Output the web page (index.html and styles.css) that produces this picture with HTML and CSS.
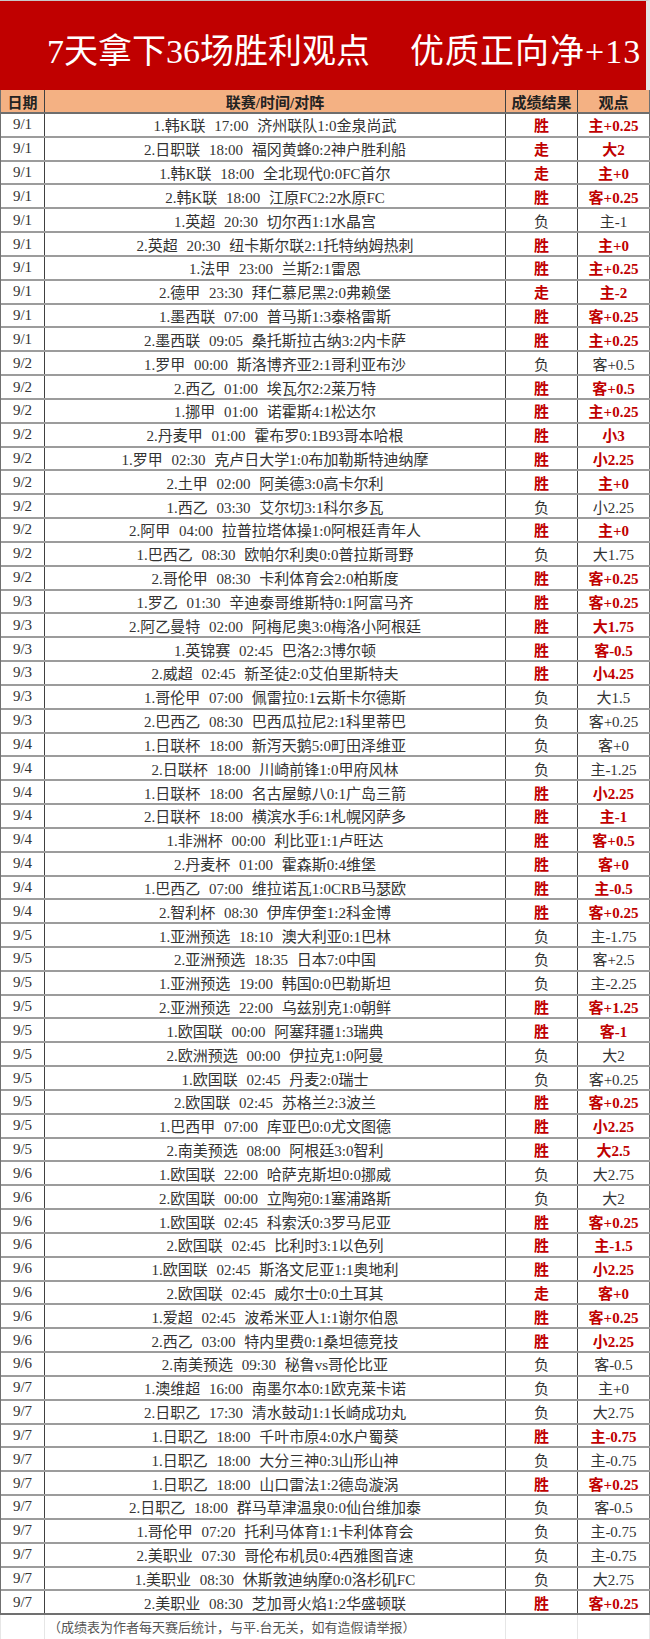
FILE: index.html
```html
<!DOCTYPE html>
<html lang="zh-CN">
<head>
<meta charset="utf-8">
<title>7天拿下36场胜利观点</title>
<link rel="stylesheet" href="styles.css">
</head>
<body>
<div class="sheet">
  <div class="title"><span>7天拿下36场胜利观点</span><span class="t2">优质正向净+13</span></div>
  <div class="table">
    <div class="row head"><div class="c">日期</div><div class="c">联赛/时间/对阵</div><div class="c">成绩结果</div><div class="c">观点</div></div>
    <div class="row win"><div class="c">9/1</div><div class="c m">1.韩K联 17:00 济州联队1:0金泉尚武</div><div class="c">胜</div><div class="c">主+0.25</div></div>
    <div class="row win"><div class="c">9/1</div><div class="c m">2.日职联 18:00 福冈黄蜂0:2神户胜利船</div><div class="c">走</div><div class="c">大2</div></div>
    <div class="row win"><div class="c">9/1</div><div class="c m">1.韩K联 18:00 全北现代0:0FC首尔</div><div class="c">走</div><div class="c">主+0</div></div>
    <div class="row win"><div class="c">9/1</div><div class="c m">2.韩K联 18:00 江原FC2:2水原FC</div><div class="c">胜</div><div class="c">客+0.25</div></div>
    <div class="row"><div class="c">9/1</div><div class="c m">1.英超 20:30 切尔西1:1水晶宫</div><div class="c">负</div><div class="c">主-1</div></div>
    <div class="row win"><div class="c">9/1</div><div class="c m">2.英超 20:30 纽卡斯尔联2:1托特纳姆热刺</div><div class="c">胜</div><div class="c">主+0</div></div>
    <div class="row win"><div class="c">9/1</div><div class="c m">1.法甲 23:00 兰斯2:1雷恩</div><div class="c">胜</div><div class="c">主+0.25</div></div>
    <div class="row win"><div class="c">9/1</div><div class="c m">2.德甲 23:30 拜仁慕尼黑2:0弗赖堡</div><div class="c">走</div><div class="c">主-2</div></div>
    <div class="row win"><div class="c">9/1</div><div class="c m">1.墨西联 07:00 普马斯1:3泰格雷斯</div><div class="c">胜</div><div class="c">客+0.25</div></div>
    <div class="row win"><div class="c">9/1</div><div class="c m">2.墨西联 09:05 桑托斯拉古纳3:2内卡萨</div><div class="c">胜</div><div class="c">主+0.25</div></div>
    <div class="row"><div class="c">9/2</div><div class="c m">1.罗甲 00:00 斯洛博齐亚2:1哥利亚布沙</div><div class="c">负</div><div class="c">客+0.5</div></div>
    <div class="row win"><div class="c">9/2</div><div class="c m">2.西乙 01:00 埃瓦尔2:2莱万特</div><div class="c">胜</div><div class="c">客+0.5</div></div>
    <div class="row win"><div class="c">9/2</div><div class="c m">1.挪甲 01:00 诺霍斯4:1松达尔</div><div class="c">胜</div><div class="c">主+0.25</div></div>
    <div class="row win"><div class="c">9/2</div><div class="c m">2.丹麦甲 01:00 霍布罗0:1B93哥本哈根</div><div class="c">胜</div><div class="c">小3</div></div>
    <div class="row win"><div class="c">9/2</div><div class="c m">1.罗甲 02:30 克卢日大学1:0布加勒斯特迪纳摩</div><div class="c">胜</div><div class="c">小2.25</div></div>
    <div class="row win"><div class="c">9/2</div><div class="c m">2.土甲 02:00 阿美德3:0高卡尔利</div><div class="c">胜</div><div class="c">主+0</div></div>
    <div class="row"><div class="c">9/2</div><div class="c m">1.西乙 03:30 艾尔切3:1科尔多瓦</div><div class="c">负</div><div class="c">小2.25</div></div>
    <div class="row win"><div class="c">9/2</div><div class="c m">2.阿甲 04:00 拉普拉塔体操1:0阿根廷青年人</div><div class="c">胜</div><div class="c">主+0</div></div>
    <div class="row"><div class="c">9/2</div><div class="c m">1.巴西乙 08:30 欧帕尔利奥0:0普拉斯哥野</div><div class="c">负</div><div class="c">大1.75</div></div>
    <div class="row win"><div class="c">9/2</div><div class="c m">2.哥伦甲 08:30 卡利体育会2:0柏斯度</div><div class="c">胜</div><div class="c">客+0.25</div></div>
    <div class="row win"><div class="c">9/3</div><div class="c m">1.罗乙 01:30 辛迪泰哥维斯特0:1阿富马齐</div><div class="c">胜</div><div class="c">客+0.25</div></div>
    <div class="row win"><div class="c">9/3</div><div class="c m">2.阿乙曼特 02:00 阿梅尼奥3:0梅洛小阿根廷</div><div class="c">胜</div><div class="c">大1.75</div></div>
    <div class="row win"><div class="c">9/3</div><div class="c m">1.英锦赛 02:45 巴洛2:3博尔顿</div><div class="c">胜</div><div class="c">客-0.5</div></div>
    <div class="row win"><div class="c">9/3</div><div class="c m">2.威超 02:45 新圣徒2:0艾伯里斯特夫</div><div class="c">胜</div><div class="c">小4.25</div></div>
    <div class="row"><div class="c">9/3</div><div class="c m">1.哥伦甲 07:00 佩雷拉0:1云斯卡尔德斯</div><div class="c">负</div><div class="c">大1.5</div></div>
    <div class="row"><div class="c">9/3</div><div class="c m">2.巴西乙 08:30 巴西瓜拉尼2:1科里蒂巴</div><div class="c">负</div><div class="c">客+0.25</div></div>
    <div class="row"><div class="c">9/4</div><div class="c m">1.日联杯 18:00 新泻天鹅5:0町田泽维亚</div><div class="c">负</div><div class="c">客+0</div></div>
    <div class="row"><div class="c">9/4</div><div class="c m">2.日联杯 18:00 川崎前锋1:0甲府风林</div><div class="c">负</div><div class="c">主-1.25</div></div>
    <div class="row win"><div class="c">9/4</div><div class="c m">1.日联杯 18:00 名古屋鲸八0:1广岛三箭</div><div class="c">胜</div><div class="c">小2.25</div></div>
    <div class="row win"><div class="c">9/4</div><div class="c m">2.日联杯 18:00 横滨水手6:1札幌冈萨多</div><div class="c">胜</div><div class="c">主-1</div></div>
    <div class="row win"><div class="c">9/4</div><div class="c m">1.非洲杯 00:00 利比亚1:1卢旺达</div><div class="c">胜</div><div class="c">客+0.5</div></div>
    <div class="row win"><div class="c">9/4</div><div class="c m">2.丹麦杯 01:00 霍森斯0:4维堡</div><div class="c">胜</div><div class="c">客+0</div></div>
    <div class="row win"><div class="c">9/4</div><div class="c m">1.巴西乙 07:00 维拉诺瓦1:0CRB马瑟欧</div><div class="c">胜</div><div class="c">主-0.5</div></div>
    <div class="row win"><div class="c">9/4</div><div class="c m">2.智利杯 08:30 伊库伊奎1:2科金博</div><div class="c">胜</div><div class="c">客+0.25</div></div>
    <div class="row"><div class="c">9/5</div><div class="c m">1.亚洲预选 18:10 澳大利亚0:1巴林</div><div class="c">负</div><div class="c">主-1.75</div></div>
    <div class="row"><div class="c">9/5</div><div class="c m">2.亚洲预选 18:35 日本7:0中国</div><div class="c">负</div><div class="c">客+2.5</div></div>
    <div class="row"><div class="c">9/5</div><div class="c m">1.亚洲预选 19:00 韩国0:0巴勒斯坦</div><div class="c">负</div><div class="c">主-2.25</div></div>
    <div class="row win"><div class="c">9/5</div><div class="c m">2.亚洲预选 22:00 乌兹别克1:0朝鲜</div><div class="c">胜</div><div class="c">客+1.25</div></div>
    <div class="row win"><div class="c">9/5</div><div class="c m">1.欧国联 00:00 阿塞拜疆1:3瑞典</div><div class="c">胜</div><div class="c">客-1</div></div>
    <div class="row"><div class="c">9/5</div><div class="c m">2.欧洲预选 00:00 伊拉克1:0阿曼</div><div class="c">负</div><div class="c">大2</div></div>
    <div class="row"><div class="c">9/5</div><div class="c m">1.欧国联 02:45 丹麦2:0瑞士</div><div class="c">负</div><div class="c">客+0.25</div></div>
    <div class="row win"><div class="c">9/5</div><div class="c m">2.欧国联 02:45 苏格兰2:3波兰</div><div class="c">胜</div><div class="c">客+0.25</div></div>
    <div class="row win"><div class="c">9/5</div><div class="c m">1.巴西甲 07:00 库亚巴0:0尤文图德</div><div class="c">胜</div><div class="c">小2.25</div></div>
    <div class="row win"><div class="c">9/5</div><div class="c m">2.南美预选 08:00 阿根廷3:0智利</div><div class="c">胜</div><div class="c">大2.5</div></div>
    <div class="row"><div class="c">9/6</div><div class="c m">1.欧国联 22:00 哈萨克斯坦0:0挪威</div><div class="c">负</div><div class="c">大2.75</div></div>
    <div class="row"><div class="c">9/6</div><div class="c m">2.欧国联 00:00 立陶宛0:1塞浦路斯</div><div class="c">负</div><div class="c">大2</div></div>
    <div class="row win"><div class="c">9/6</div><div class="c m">1.欧国联 02:45 科索沃0:3罗马尼亚</div><div class="c">胜</div><div class="c">客+0.25</div></div>
    <div class="row win"><div class="c">9/6</div><div class="c m">2.欧国联 02:45 比利时3:1以色列</div><div class="c">胜</div><div class="c">主-1.5</div></div>
    <div class="row win"><div class="c">9/6</div><div class="c m">1.欧国联 02:45 斯洛文尼亚1:1奥地利</div><div class="c">胜</div><div class="c">小2.25</div></div>
    <div class="row win"><div class="c">9/6</div><div class="c m">2.欧国联 02:45 威尔士0:0土耳其</div><div class="c">走</div><div class="c">客+0</div></div>
    <div class="row win"><div class="c">9/6</div><div class="c m">1.爱超 02:45 波希米亚人1:1谢尔伯恩</div><div class="c">胜</div><div class="c">客+0.25</div></div>
    <div class="row win"><div class="c">9/6</div><div class="c m">2.西乙 03:00 特内里费0:1桑坦德竞技</div><div class="c">胜</div><div class="c">小2.25</div></div>
    <div class="row"><div class="c">9/6</div><div class="c m">2.南美预选 09:30 秘鲁vs哥伦比亚</div><div class="c">负</div><div class="c">客-0.5</div></div>
    <div class="row"><div class="c">9/7</div><div class="c m">1.澳维超 16:00 南墨尔本0:1欧克莱卡诺</div><div class="c">负</div><div class="c">主+0</div></div>
    <div class="row"><div class="c">9/7</div><div class="c m">2.日职乙 17:30 清水鼓动1:1长崎成功丸</div><div class="c">负</div><div class="c">大2.75</div></div>
    <div class="row win"><div class="c">9/7</div><div class="c m">1.日职乙 18:00 千叶市原4:0水户蜀葵</div><div class="c">胜</div><div class="c">主-0.75</div></div>
    <div class="row"><div class="c">9/7</div><div class="c m">1.日职乙 18:00 大分三神0:3山形山神</div><div class="c">负</div><div class="c">主-0.75</div></div>
    <div class="row win"><div class="c">9/7</div><div class="c m">1.日职乙 18:00 山口雷法1:2德岛漩涡</div><div class="c">胜</div><div class="c">客+0.25</div></div>
    <div class="row"><div class="c">9/7</div><div class="c m">2.日职乙 18:00 群马草津温泉0:0仙台维加泰</div><div class="c">负</div><div class="c">客-0.5</div></div>
    <div class="row"><div class="c">9/7</div><div class="c m">1.哥伦甲 07:20 托利马体育1:1卡利体育会</div><div class="c">负</div><div class="c">主-0.75</div></div>
    <div class="row"><div class="c">9/7</div><div class="c m">2.美职业 07:30 哥伦布机员0:4西雅图音速</div><div class="c">负</div><div class="c">主-0.75</div></div>
    <div class="row"><div class="c">9/7</div><div class="c m">1.美职业 08:30 休斯敦迪纳摩0:0洛杉矶FC</div><div class="c">负</div><div class="c">大2.75</div></div>
    <div class="row win last"><div class="c">9/7</div><div class="c m">2.美职业 08:30 芝加哥火焰1:2华盛顿联</div><div class="c">胜</div><div class="c">客+0.25</div></div>
  </div>
  <div class="foot"><div class="f"></div><div class="f note">（成绩表为作者每天赛后统计，与平.台无关，如有造假请举报）</div><div class="f"></div><div class="f"></div></div>
</div>
</body>
</html>
```

FILE: styles.css
```css
html, body {
  margin: 0;
  padding: 0;
  background: #ffffff;
}

.sheet {
  width: 650px;
  font-family: "Liberation Serif", "Noto Sans CJK SC", serif;
}

.title {
  box-sizing: border-box;
  height: 90px;
  background: #c00000;
  border-top: 1px solid #c8c8c8;
  border-right: 4px solid #e4e4e4;
  color: #ffffff;
  font-size: 34px;
  line-height: 1;
  display: flex;
  align-items: center;
  gap: 40px;
  padding: 12px 0 0 47px;
  white-space: nowrap;
}

.t2 {
  letter-spacing: 1px;
}

.table {
  border-left: 1px solid #707070;
}

.row {
  box-sizing: border-box;
  display: grid;
  grid-template-columns: 44px 461px 72px 72px;
  height: 23.83px;
  border-bottom: 2px solid #9c9c9c;
  font-size: 15px;
  color: #333333;
}

.row.head {
  height: 24px;
  background: #f4b183;
  border-bottom: 2px solid #6e6e6e;
  color: #222222;
  font-weight: bold;
}

.row.last {
  border-bottom-color: #707070;
}

.c {
  display: flex;
  align-items: center;
  justify-content: center;
  white-space: nowrap;
  overflow: hidden;
  border-right: 1px solid #404040;
}

.c:last-child {
  border-right: 1px solid #707070;
}

.m {
  word-spacing: 5px;
}

.row.head .c {
  word-spacing: 0;
}

.row.win .c:nth-child(3),
.row.win .c:nth-child(4) {
  color: #c00000;
  font-weight: bold;
}

.foot {
  display: grid;
  grid-template-columns: 45px 461px 72px 72px;
  height: 24px;
}

.f {
  border-right: 1px solid #e6e6e6;
}

.f:first-child {
  border-left: 1px solid #e6e6e6;
}

.note {
  font-family: "Noto Sans CJK SC", sans-serif;
  font-size: 13px;
  color: #555555;
  line-height: 24px;
  padding-left: 3px;
  white-space: nowrap;
  overflow: visible;
}
```
